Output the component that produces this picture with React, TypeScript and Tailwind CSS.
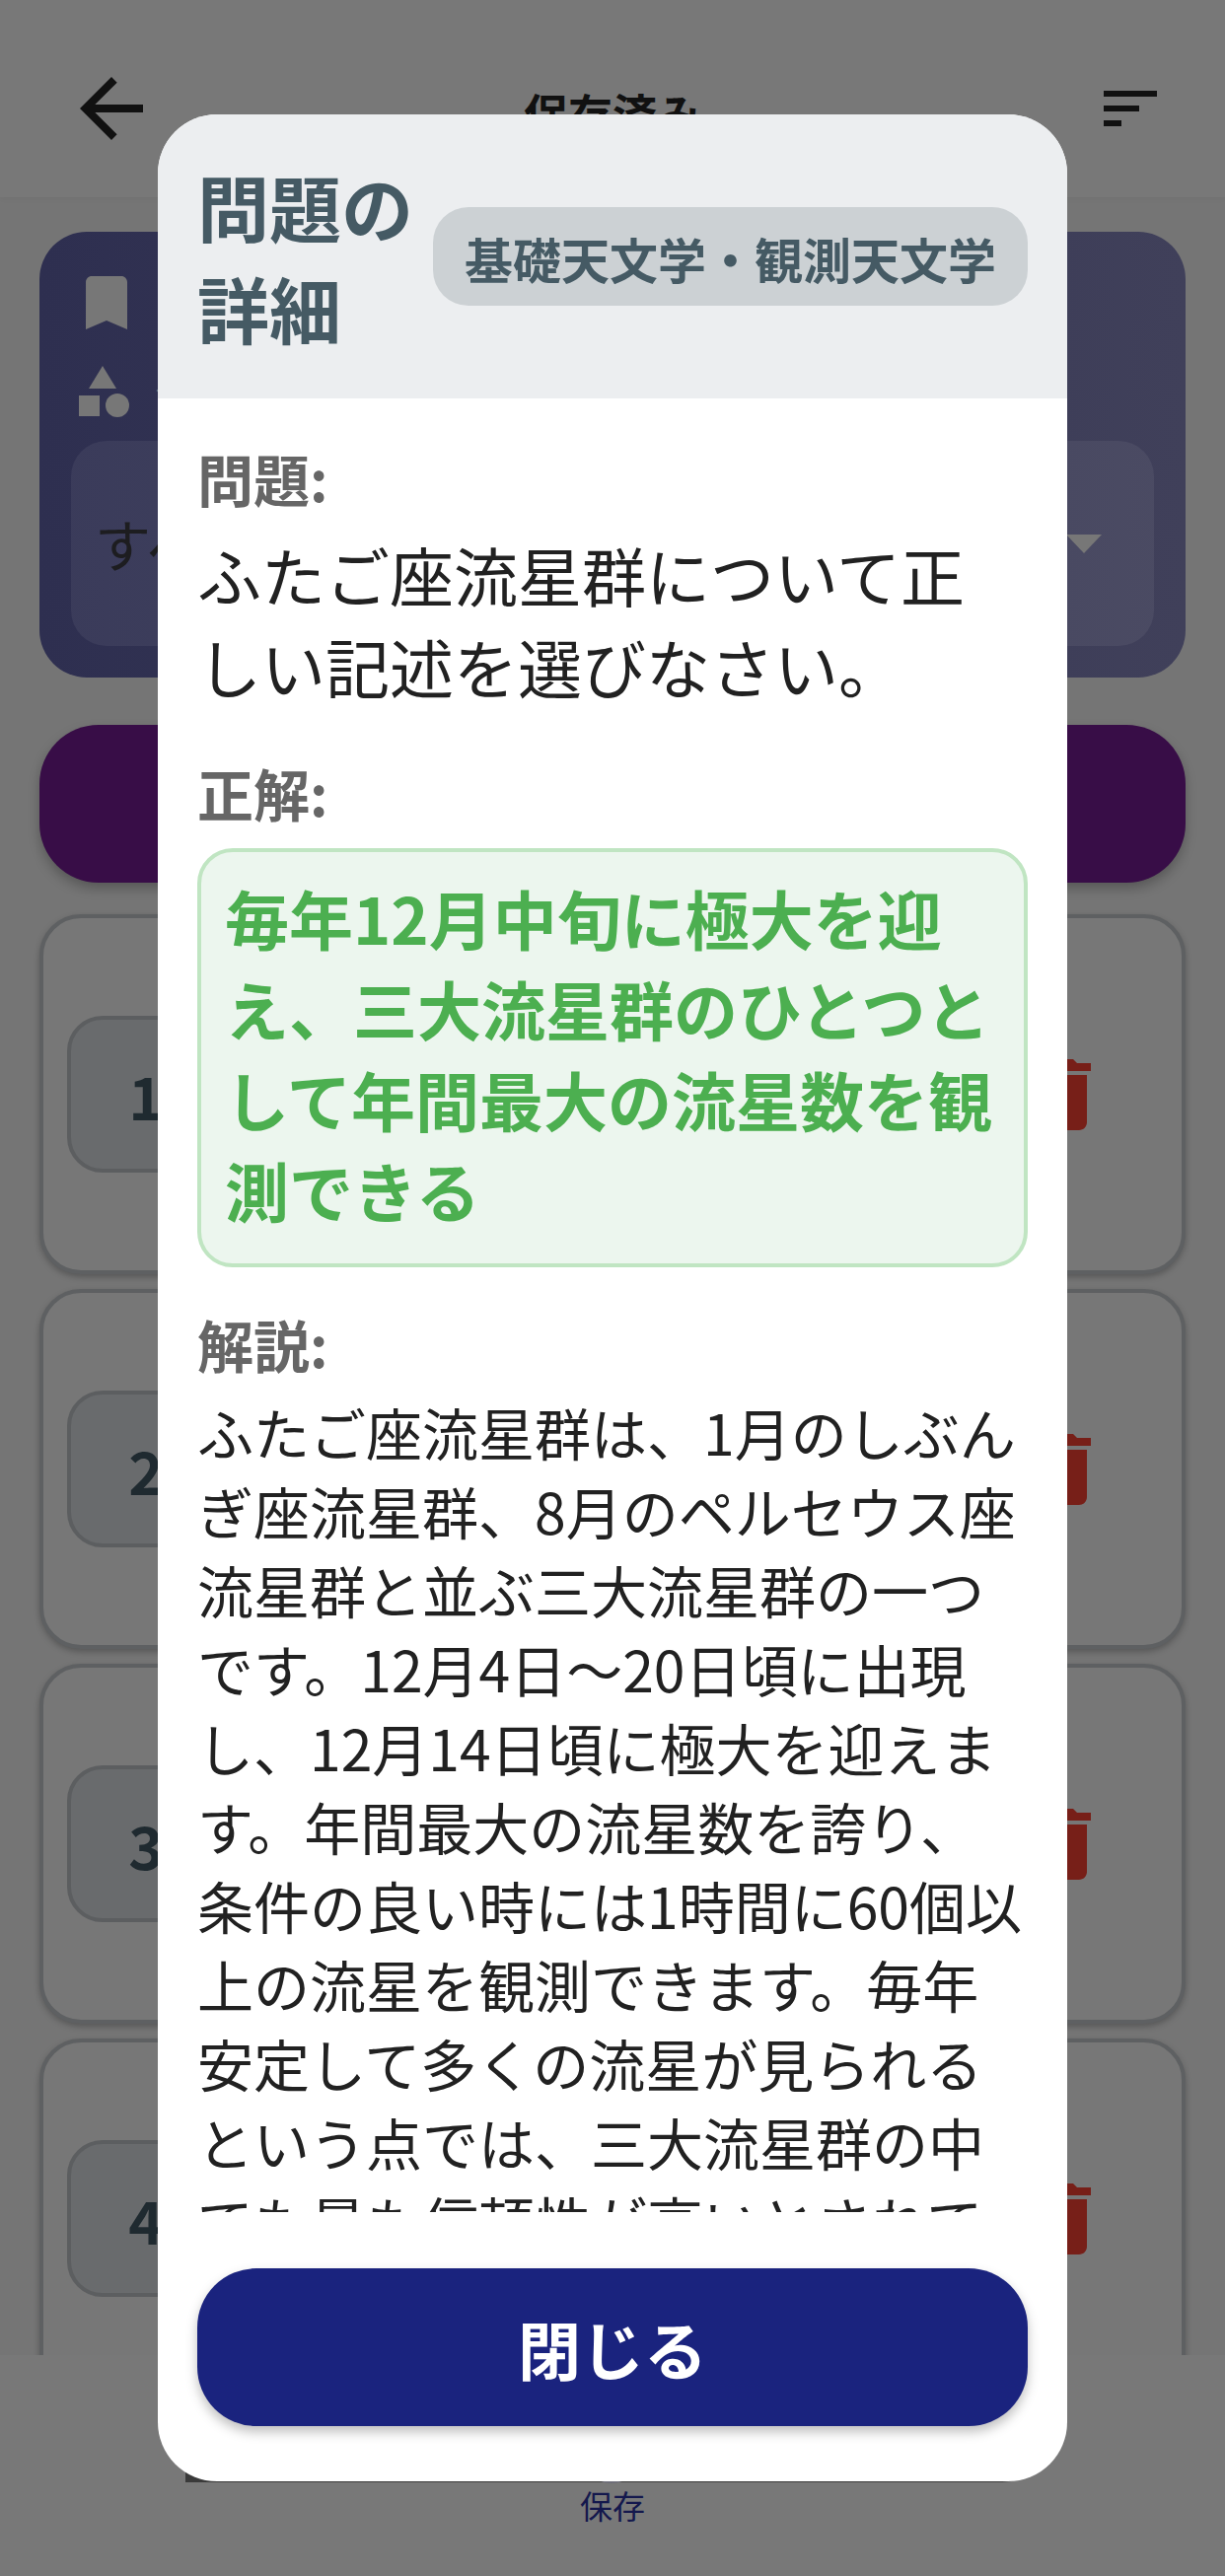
import { MdArrowBack, MdBookmark, MdDelete, MdSort } from "react-icons/md";

const explanation =
  "ふたご座流星群は、1月のしぶんぎ座流星群、8月のペルセウス座流星群と並ぶ三大流星群の一つです。12月4日〜20日頃に出現し、12月14日頃に極大を迎えます。年間最大の流星数を誇り、条件の良い時には1時間に60個以上の流星を観測できます。毎年安定して多くの流星が見られるという点では、三大流星群の中でも最も信頼性が高いとされています。";

function ShapesIcon() {
  return (
    <svg viewBox="0 0 51 52" className="h-[52px] w-[51px] fill-[#777777]">
      <polygon points="24,0 38,23 10,23" />
      <rect x="0" y="30" width="21" height="21" />
      <circle cx="39" cy="40" r="12" />
    </svg>
  );
}

function SavedCard({ n }: { n: number }) {
  return (
    <div className="flex h-[365px] shrink-0 items-center justify-between rounded-[42px] border-4 border-[#5e6062] bg-[#777777] pl-[24px] pr-[72px] shadow-[0_3px_6px_rgba(0,0,0,0.25)]">
      <div className="flex h-[159px] w-[160px] items-center justify-center rounded-[36px] border-4 border-[#5c5e60] bg-[#696b6d] text-[60px] font-bold text-[#1f2a30]">
        {n}
      </div>
      <MdDelete size={96} className="text-[#771f18]" />
    </div>
  );
}

function BackgroundPage() {
  return (
    <>
      <header className="relative flex h-[200px] items-start justify-between bg-[#787878] pl-[65px] pr-[60px] pt-[62px] shadow-[0_2px_6px_rgba(0,0,0,0.03)]">
        <MdArrowBack size={96} className="text-[#111111]" />
        <span className="absolute left-0 right-0 top-[80px] text-center text-[45px] font-bold leading-[70px] text-[#111111]">
          保存済み
        </span>
        <MdSort size={72} className="mt-[12px] text-[#111111]" />
      </header>

      <main className="flex flex-col px-[40px] pt-[35px]">
        <section className="flex h-[452px] flex-col rounded-[48px] bg-gradient-to-r from-[#2e2f50] to-[#40405a] px-[32px] pt-[36px]">
          <MdBookmark size={72} className="text-[#777777]" />
          <div className="mt-[18px] flex h-[72px] items-center gap-[27px] pl-[8px]">
            <ShapesIcon />
            <span className="text-[48px] font-bold text-[#777777]">分野</span>
          </div>
          <div className="mt-[14px] flex h-[208px] items-center justify-between rounded-[36px] bg-white/[0.06] pl-[24px] pr-[53px]">
            <span className="text-[57px] text-[#1d1d20]">すべて</span>
            <svg viewBox="0 0 36 19" className="h-[19px] w-[36px] fill-[#777777]">
              <polygon points="0,0 36,0 18,19" />
            </svg>
          </div>
        </section>

        <div className="mt-[48px] h-[160px] rounded-[60px] bg-[#380d47] shadow-[0_6px_12px_rgba(0,0,0,0.25)]" />

        <div className="mt-[32px] flex flex-col gap-[15px]">
          {[1, 2, 3, 4].map((n) => (
            <SavedCard key={n} n={n} />
          ))}
        </div>
      </main>

      {/* bottom nav, lies over the list */}
      <nav className="absolute bottom-0 left-0 right-0 flex h-[224px] flex-col items-center bg-[#787878] pt-[128px]">
        <div className="absolute left-[188px] top-[60px] h-[69px] w-[872px] rounded-br-[44px] bg-[#3a3a3a]" />
        <div className="absolute left-[590px] top-[70px] h-[60px] w-[60px] rounded-full bg-[#6c6c78]" />
        <span className="text-[33px] leading-[48px] text-[#14184d]">保存</span>
      </nav>
    </>
  );
}

function DetailModal() {
  return (
    <div className="absolute left-[160px] top-[116px] flex h-[2400px] w-[922px] flex-col overflow-hidden rounded-[60px] bg-white">
      <div className="flex h-[288px] shrink-0 items-center bg-[#eceef0] px-[40px]">
        <h2 className="w-[219px] shrink-0 text-[73px] font-bold leading-[103px] text-[#455a64]">問題の詳細</h2>
        <span className="ml-[20px] flex h-[100px] w-[603px] items-center justify-center rounded-[36px] bg-[#ccd1d4] pt-[3px] text-[49px] font-bold text-[#455a64]">
          基礎天文学・観測天文学
        </span>
      </div>

      <div className="min-h-0 flex-1 overflow-hidden px-[40px] pt-[40px]">
        <h3 className="text-[57px] font-bold leading-[80px] text-[#666666]">問題:</h3>
        <p className="mt-[12px] text-[65px] leading-[93px] text-[#212121]">
          ふたご座流星群について正しい記述を選びなさい。
        </p>

        <h3 className="mt-[41px] text-[57px] font-bold leading-[80px] text-[#666666]">正解:</h3>
        <p className="mt-[17px] rounded-[36px] border-4 border-[#c0e5c2] bg-[#ecf6ee] pb-[29px] pl-[24px] pr-[18px] pt-[20px] text-[65px] font-bold leading-[92px] text-[#4caf50]">
          毎年12月中旬に極大を迎え、三大流星群のひとつとして年間最大の流星数を観測できる
        </p>

        <h3 className="mt-[37px] text-[57px] font-bold leading-[80px] text-[#666666]">解説:</h3>
        <p className="mt-[9px] text-[57px] leading-[80px] text-[#212121]">{explanation}</p>
      </div>

      <div className="shrink-0 px-[40px] pb-[56px] pt-[57px]">
        <button className="flex h-[160px] w-full items-center justify-center rounded-[60px] bg-[#1a237e] text-[64px] font-bold text-white shadow-[0_6px_12px_rgba(0,0,0,0.25)]">
          閉じる
        </button>
      </div>
    </div>
  );
}

export default function App() {
  return (
    <div className="relative h-[2612px] w-[1242px] overflow-hidden bg-[#757575] font-['Noto_Sans_CJK_JP',sans-serif]">
      <BackgroundPage />
      <DetailModal />
    </div>
  );
}
